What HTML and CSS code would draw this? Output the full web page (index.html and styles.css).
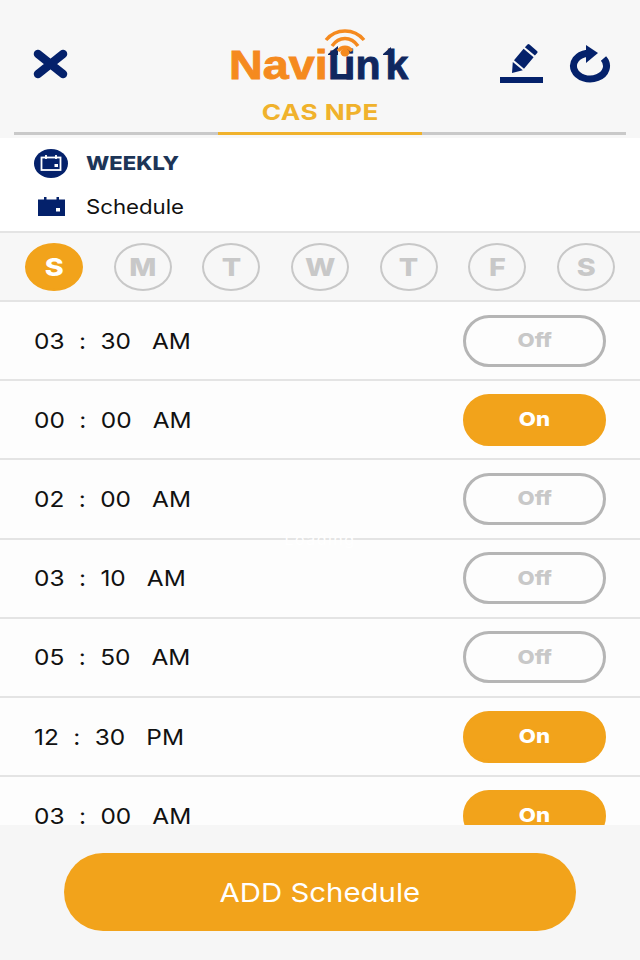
FILE: index.html
```html
<!DOCTYPE html>
<html lang="en">
<head>
<meta charset="utf-8">
<title>NaviLink Schedule</title>
<link rel="stylesheet" href="styles.css">
</head>
<body>
<div class="app">
  <header class="header">
    <div class="topbar">
      <svg class="icon-close" viewBox="0 0 35 30"><path d="M5 5 L30 25 M30 5 L5 25" fill="none" stroke="#04216b" stroke-width="8.5" stroke-linecap="round"/></svg>
      <div class="logo">
        <span class="logo-navi">Navi</span><span class="logo-link"><span class="logo-l">L</span><span>i</span><span class="logo-n">n</span>k</span>
        <svg class="logo-mark" viewBox="0 0 90 56">
          <path d="M5 26 L15 18 V27 H5Z M60 26 L68 19 V27 H60Z" fill="#10275f"/>
          <g fill="none" stroke="#f58a1f" stroke-width="3.4">
            <path d="M3 12 C13 0 31 0 41 12"/>
            <path d="M9 18 C16 8 28 8 35 18"/>
            <path d="M15 23 C19 18 25 18 29 23"/>
          </g>
          <ellipse cx="22" cy="24.500" rx="4.500" ry="4" fill="#f58a1f"/>
        </svg>
      </div>
      <div class="top-actions">
        <svg class="icon-edit" viewBox="0 0 44 40">
          <path d="M12 29 L12.800 17.900 L22.800 26.300Z M14 16.300 L24 24.700 L33.600 13.200 L23.600 4.800Z M24.900 3.200 L27.500 .5 Q28.500 -.3 29.500 .5 L37 7 Q38 8 37.200 9 L34.900 11.600Z" fill="#04216b"/>
          <rect x="0" y="33" width="43" height="6" fill="#04216b"/>
        </svg>
        <svg class="icon-refresh" viewBox="0 0 42 39">
          <path d="M34.500 14.500 A16.500 13 0 1 1 18 9.200" fill="none" stroke="#04216b" stroke-width="7"/>
          <path d="M17 1 L29 9 L17 19Z" fill="#04216b"/>
        </svg>
      </div>
    </div>
    <div class="tabs"><div class="tab-active"><span class="tab-label">CAS NPE</span></div></div>
  </header>

  <section class="info">
    <div class="info-row">
      <svg class="icon-weekly" viewBox="0 0 34 29"><ellipse cx="17" cy="14.500" rx="17" ry="14.500" fill="#04216b"/><rect x="7.500" y="8.500" width="19" height="12.500" fill="none" stroke="#fff" stroke-width="1.800"/><path d="M12 6V10 M22 6V10" stroke="#fff" stroke-width="1.800"/><rect x="20.500" y="15" width="3.500" height="3" fill="#fff"/></svg>
      <span class="info-weekly">WEEKLY</span>
    </div>
    <div class="info-row">
      <svg class="icon-cal" viewBox="0 0 27 19"><path d="M0 2.500H6V0H8.500V2.500H18.500V0H21V2.500H27V19H0Z" fill="#04216b"/><rect x="18" y="11" width="4" height="3.500" fill="#fff"/></svg>
      <span class="info-schedule">Schedule</span>
    </div>
  </section>

  <nav class="days">
    <div class="day day-on"><span class="day-letter">S</span></div>
    <div class="day"><span class="day-letter">M</span></div>
    <div class="day"><span class="day-letter">T</span></div>
    <div class="day"><span class="day-letter">W</span></div>
    <div class="day"><span class="day-letter">T</span></div>
    <div class="day"><span class="day-letter">F</span></div>
    <div class="day"><span class="day-letter">S</span></div>
  </nav>

  <main class="list">
    <div class="row"><div class="time"><span>03</span><span class="colon">:</span><span>30</span><span class="ampm">AM</span></div><div class="toggle"><span class="toggle-label">Off</span></div></div>
    <div class="row"><div class="time"><span>00</span><span class="colon">:</span><span>00</span><span class="ampm">AM</span></div><div class="toggle toggle-on"><span class="toggle-label">On</span></div></div>
    <div class="row"><div class="time"><span>02</span><span class="colon">:</span><span>00</span><span class="ampm">AM</span></div><div class="toggle"><span class="toggle-label">Off</span></div></div>
    <div class="row"><div class="time"><span>03</span><span class="colon">:</span><span>10</span><span class="ampm">AM</span></div><div class="toggle"><span class="toggle-label">Off</span></div></div>
    <div class="row"><div class="time"><span>05</span><span class="colon">:</span><span>50</span><span class="ampm">AM</span></div><div class="toggle"><span class="toggle-label">Off</span></div></div>
    <div class="row"><div class="time"><span>12</span><span class="colon">:</span><span>30</span><span class="ampm">PM</span></div><div class="toggle toggle-on"><span class="toggle-label">On</span></div></div>
    <div class="row"><div class="time"><span>03</span><span class="colon">:</span><span>00</span><span class="ampm">AM</span></div><div class="toggle toggle-on"><span class="toggle-label">On</span></div></div>
    <div class="loading">Loading</div>
  </main>

  <footer class="footer"><button class="add"><span class="add-label">ADD Schedule</span></button></footer>
</div>
</body>
</html>
```
FILE: styles.css
```css
* { box-sizing: border-box; }
html, body { margin: 0; padding: 0; }
body { width: 640px; height: 960px; overflow: hidden; font-family: Inter, "Liberation Sans", sans-serif; background: #f7f7f7; }
.app { width: 640px; height: 960px; display: flex; flex-direction: column; }

.header { height: 138px; background: #f7f7f7; padding: 28px 14px 0; flex: none; }
.topbar { height: 70px; display: flex; align-items: flex-start; position: relative; }
.icon-close { width: 35px; height: 30px; margin: 21px 0 0 19px; flex: none; }
.logo { position: relative; margin-left: 161px; width: 182px; height: 53px; padding-top: 17px; font-family: "Liberation Sans", sans-serif; font-weight: 700; font-size: 41px; line-height: 40px; white-space: nowrap; flex: none; -webkit-text-stroke: .9px; }
.logo-navi { display: inline-block; color: #f58a1f; transform: scaleX(1.14); transform-origin: left center; margin-right: 12.400px; }
.logo-link { color: #10275f; }
.logo-l { letter-spacing: -9px; }
.logo-n { letter-spacing: 5px; }
.logo-mark { position: absolute; left: 94px; top: 0; width: 90px; height: 56px; }
.top-actions { display: flex; margin-left: 89px; gap: 25px; padding-top: 16px; }
.icon-edit { width: 44px; height: 40px; flex: none; }
.icon-refresh { width: 42px; height: 39px; flex: none; }

.tabs { height: 37px; border-bottom: 3px solid #c9c9c9; position: relative; }
.tab-active { position: absolute; left: 204px; width: 204px; bottom: -3px; height: 37px; border-bottom: 3px solid #f0b22c; text-align: center; color: #f0b22c; font-weight: 700; font-size: 22px; line-height: 28px; }
.tab-label { display: inline-block; transform: scaleX(1.19); letter-spacing: .4px; }

.info { height: 93px; background: #fff; padding: 11px 0 0 34px; flex: none; }
.info-row { display: flex; align-items: center; height: 29px; margin-bottom: 14px; }
.icon-weekly { width: 34px; height: 29px; flex: none; }
.icon-cal { width: 27px; height: 19px; margin-left: 4px; margin-right: 3px; flex: none; }
.info-weekly { margin-left: 18px; font-weight: 800; font-size: 19px; color: #1d3557; transform: scaleX(1.16); transform-origin: left center; }
.info-schedule { margin-left: 18px; font-size: 20px; color: #111; transform: scaleX(1.11); transform-origin: left center; }

.days { height: 71px; flex: none; display: flex; justify-content: space-between; align-items: center; padding: 0 25px; background: #f7f7f7; border-top: 2px solid #e4e4e4; border-bottom: 2px solid #e4e4e4; }
.day { width: 58px; height: 48px; border-radius: 50%; border: 2px solid #c8c8c8; color: #c8c8c8; font-weight: 800; font-size: 25px; display: flex; align-items: center; justify-content: center; }
.day-letter { display: inline-block; transform: scaleX(1.15); }
.day-on { background: #f2a31b; border-color: #f2a31b; color: #fff; }

.list { height: 523px; flex: none; overflow: hidden; background: #fdfdfd; position: relative; }
.row { height: 79.200px; display: flex; align-items: center; justify-content: space-between; padding: 0 34px 0 34px; border-bottom: 2px solid #e4e4e4; }
.time { display: flex; font-size: 22px; color: #111; transform: scaleX(1.11); transform-origin: left center; }
.colon { margin: 0 13px; }
.ampm { margin-left: 19px; }
.toggle { width: 143px; height: 52px; border-radius: 26px; border: 3px solid #b5b5b5; display: flex; align-items: center; justify-content: center; color: #c8c8c8; font-weight: 800; font-size: 19px; background: #fdfdfd; }
.toggle-label { display: inline-block; transform: scaleX(1.17); }
.toggle-on { background: #f2a31b; border-color: #f2a31b; color: #fff; }
.loading { position: absolute; left: 0; right: 0; top: 227px; text-align: center; color: #fff; font-size: 16px; letter-spacing: 1.500px; }

.footer { flex: 1; background: #f6f6f6; padding-top: 28px; display: flex; justify-content: center; }
.add { width: 512px; height: 78px; border: 0; border-radius: 39px; background: #f2a31b; color: #fff; font-family: Inter, "Liberation Sans", sans-serif; font-size: 26px; }
.add-label { display: inline-block; transform: scaleX(1.13); }
```
